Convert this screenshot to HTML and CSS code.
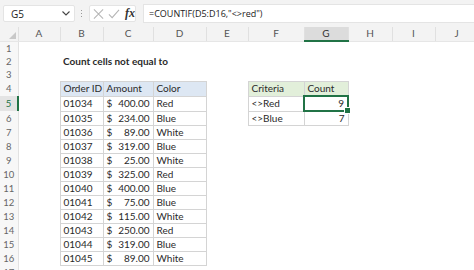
FILE: index.html
```html
<!DOCTYPE html>
<html lang="en">
<head>
    <meta charset="UTF-8">
    <title>Count cells not equal to</title>
    <link rel="stylesheet" href="styles.css">
</head>
<body>
    <div class="topbar">
        <div class="namebox">
            <span>G5</span>
            <svg class="chev" width="8" height="5" viewBox="0 0 8 5"><path d="M0.5 0.5 L4 4 L7.5 0.5" fill="none" stroke="#444" stroke-width="1.1"/></svg>
        </div>
        <div class="dots"><i></i><i></i><i></i></div>
        <div class="iconbox">
            <svg width="12" height="12" viewBox="0 0 12 12"><path d="M1 1 L11 11 M11 1 L1 11" stroke="#b4b4b4" stroke-width="1.1"/></svg>
            <svg width="13" height="12" viewBox="0 0 13 12"><path d="M1 6.5 L4.5 10 L12 1.5" fill="none" stroke="#b4b4b4" stroke-width="1.1"/></svg>
            <span class="fx">fx</span>
        </div>
        <div class="formula">=COUNTIF(D5:D16,"&lt;&gt;red")</div>
    </div>
    <table class="sheet">
        <colgroup>
            <col class="c-row"><col class="c-a"><col class="c-b"><col class="c-c"><col class="c-d"><col class="c-e"><col class="c-f"><col class="c-g"><col class="c-h"><col class="c-i"><col class="c-j">
        </colgroup>
        <tr class="colhead">
            <th class="corner"><span class="tri"></span></th>
            <th>A</th><th>B</th><th>C</th><th>D</th><th>E</th><th>F</th><th class="sel">G</th><th>H</th><th>I</th><th>J</th>
        </tr>
        <tr><th>1</th><td></td><td></td><td></td><td></td><td></td><td></td><td></td><td></td><td></td><td></td></tr>
        <tr><th>2</th><td></td><td class="title" colspan="3">Count cells not equal to</td><td></td><td></td><td></td><td></td><td></td><td></td></tr>
        <tr><th>3</th><td></td><td></td><td></td><td></td><td></td><td></td><td></td><td></td><td></td><td></td></tr>
        <tr><th>4</th><td></td><td class="b hb">Order ID</td><td class="b hb">Amount</td><td class="b hb">Color</td><td></td><td class="b hg">Criteria</td><td class="b hg">Count</td><td></td><td></td><td></td></tr>
        <tr><th class="selrow">5</th><td></td><td class="b">01034</td><td class="b amt"><span>$</span><span>400.00</span></td><td class="b">Red</td><td></td><td class="b">&lt;&gt;Red</td><td class="b num active">9<i class="handle"></i></td><td></td><td></td><td></td></tr>
        <tr><th>6</th><td></td><td class="b">01035</td><td class="b amt"><span>$</span><span>234.00</span></td><td class="b">Blue</td><td></td><td class="b">&lt;&gt;Blue</td><td class="b num">7</td><td></td><td></td><td></td></tr>
        <tr><th>7</th><td></td><td class="b">01036</td><td class="b amt"><span>$</span><span>89.00</span></td><td class="b">White</td><td></td><td></td><td></td><td></td><td></td><td></td></tr>
        <tr><th>8</th><td></td><td class="b">01037</td><td class="b amt"><span>$</span><span>319.00</span></td><td class="b">Blue</td><td></td><td></td><td></td><td></td><td></td><td></td></tr>
        <tr><th>9</th><td></td><td class="b">01038</td><td class="b amt"><span>$</span><span>25.00</span></td><td class="b">White</td><td></td><td></td><td></td><td></td><td></td><td></td></tr>
        <tr><th>10</th><td></td><td class="b">01039</td><td class="b amt"><span>$</span><span>325.00</span></td><td class="b">Red</td><td></td><td></td><td></td><td></td><td></td><td></td></tr>
        <tr><th>11</th><td></td><td class="b">01040</td><td class="b amt"><span>$</span><span>400.00</span></td><td class="b">Blue</td><td></td><td></td><td></td><td></td><td></td><td></td></tr>
        <tr><th>12</th><td></td><td class="b">01041</td><td class="b amt"><span>$</span><span>75.00</span></td><td class="b">Blue</td><td></td><td></td><td></td><td></td><td></td><td></td></tr>
        <tr><th>13</th><td></td><td class="b">01042</td><td class="b amt"><span>$</span><span>115.00</span></td><td class="b">White</td><td></td><td></td><td></td><td></td><td></td><td></td></tr>
        <tr><th>14</th><td></td><td class="b">01043</td><td class="b amt"><span>$</span><span>250.00</span></td><td class="b">Red</td><td></td><td></td><td></td><td></td><td></td><td></td></tr>
        <tr><th>15</th><td></td><td class="b">01044</td><td class="b amt"><span>$</span><span>319.00</span></td><td class="b">Blue</td><td></td><td></td><td></td><td></td><td></td><td></td></tr>
        <tr><th>16</th><td></td><td class="b">01045</td><td class="b amt"><span>$</span><span>89.00</span></td><td class="b">White</td><td></td><td></td><td></td><td></td><td></td><td></td></tr>
        <tr><th>17</th><td></td><td></td><td></td><td></td><td></td><td></td><td></td><td></td><td></td><td></td></tr>
    </table>
</body>
</html>
```

FILE: styles.css
```css
body {
    margin: 0;
    background-color: #ffffff;
    font-family: Lato, "Open Sans", sans-serif;
    overflow: hidden;
}
.topbar {
    display: flex;
    align-items: center;
    height: 27px;
    padding: 0 0 0 3px;
    background-color: #f3f3f3;
    box-sizing: border-box;
}
.namebox {
    display: flex;
    align-items: center;
    justify-content: space-between;
    width: 72px;
    height: 17px;
    padding: 0 4px 0 7px;
    box-sizing: border-box;
    background-color: #fff;
    border: 1px solid #e4e4e4;
    border-radius: 2px;
    font-family: "Open Sans", sans-serif;
    font-size: 10px;
    color: #222;
}
.dots {
    display: flex;
    flex-direction: column;
    gap: 2px;
    margin: 0 7px 0 6px;
}
.dots i {
    display: block;
    width: 1px;
    height: 1px;
    background-color: #999;
}
.iconbox {
    display: flex;
    align-items: center;
    gap: 4px;
    width: 47px;
    height: 17px;
    padding: 0 0 0 3px;
    box-sizing: border-box;
    background-color: #fff;
    border: 1px solid #e4e4e4;
    border-radius: 2px;
}
.fx {
    font-family: "Liberation Serif", serif;
    font-style: italic;
    font-weight: bold;
    font-size: 12px;
    color: #333;
    margin-left: 1px;
}
.formula {
    flex: 1;
    height: 17px;
    margin-left: 7px;
    padding-left: 5px;
    line-height: 17px;
    background-color: #fff;
    border: 1px solid #e4e4e4;
    border-right: none;
    font-family: "Open Sans", sans-serif;
    font-size: 9px;
    color: #222;
}
.sheet {
    table-layout: fixed;
    border-collapse: collapse;
    width: 478px;
    font-size: 10px;
    color: #2a2a2a;
}
.c-row { width: 18px; }
.c-a { width: 42px; }
.c-b { width: 43px; }
.c-c { width: 50px; }
.c-d { width: 53px; }
.c-e { width: 42px; }
.c-f { width: 56px; }
.c-g { width: 44px; }
.c-h { width: 44px; }
.c-i { width: 43px; }
.c-j { width: 43px; }
.sheet tr {
    height: 13.5px;
}
.sheet td, .sheet th {
    padding: 0 3px;
    white-space: nowrap;
    overflow: visible;
    line-height: 13px;
}
.sheet th {
    font-weight: normal;
    font-size: 9.5px;
    color: #666;
    background-color: #f7f7f7;
    border-right: 1px solid #e2e2e2;
    text-align: center;
    padding: 0;
}
.colhead {
    height: 14px;
}
.colhead th {
    background-color: #f3f3f3;
    border-right: 1px solid #e0e0e0;
    border-bottom: 1px solid #e6e6e6;
    font-size: 10px;
    color: #555;
}
.colhead th.sel {
    background-color: #dcdcdc;
    border-bottom: 2px solid #217346;
    color: #333;
}
.corner {
    position: relative;
}
.tri {
    position: absolute;
    right: 2px;
    bottom: 2px;
    width: 0;
    height: 0;
    border-left: 7px solid transparent;
    border-bottom: 7px solid #c8c8c8;
}
.sheet th.selrow {
    background-color: #e4e4e4;
    border-right: 2px solid #217346;
    color: #217346;
}
.title {
    font-weight: bold;
}
.b {
    border: 1px solid #d4d4d4;
}
.hb {
    background-color: #dde7f3;
}
.hg {
    background-color: #e2efda;
}
.amt {
    padding: 0 3px 0 7px;
}
.amt span:first-child {
    float: left;
}
.amt span:last-child {
    float: right;
}
.num {
    text-align: right;
}
.active {
    position: relative;
    border: 2px solid #217346;
}
.handle {
    position: absolute;
    right: -4px;
    bottom: -4px;
    width: 5px;
    height: 5px;
    background-color: #217346;
    border: 1px solid #fff;
}
```
